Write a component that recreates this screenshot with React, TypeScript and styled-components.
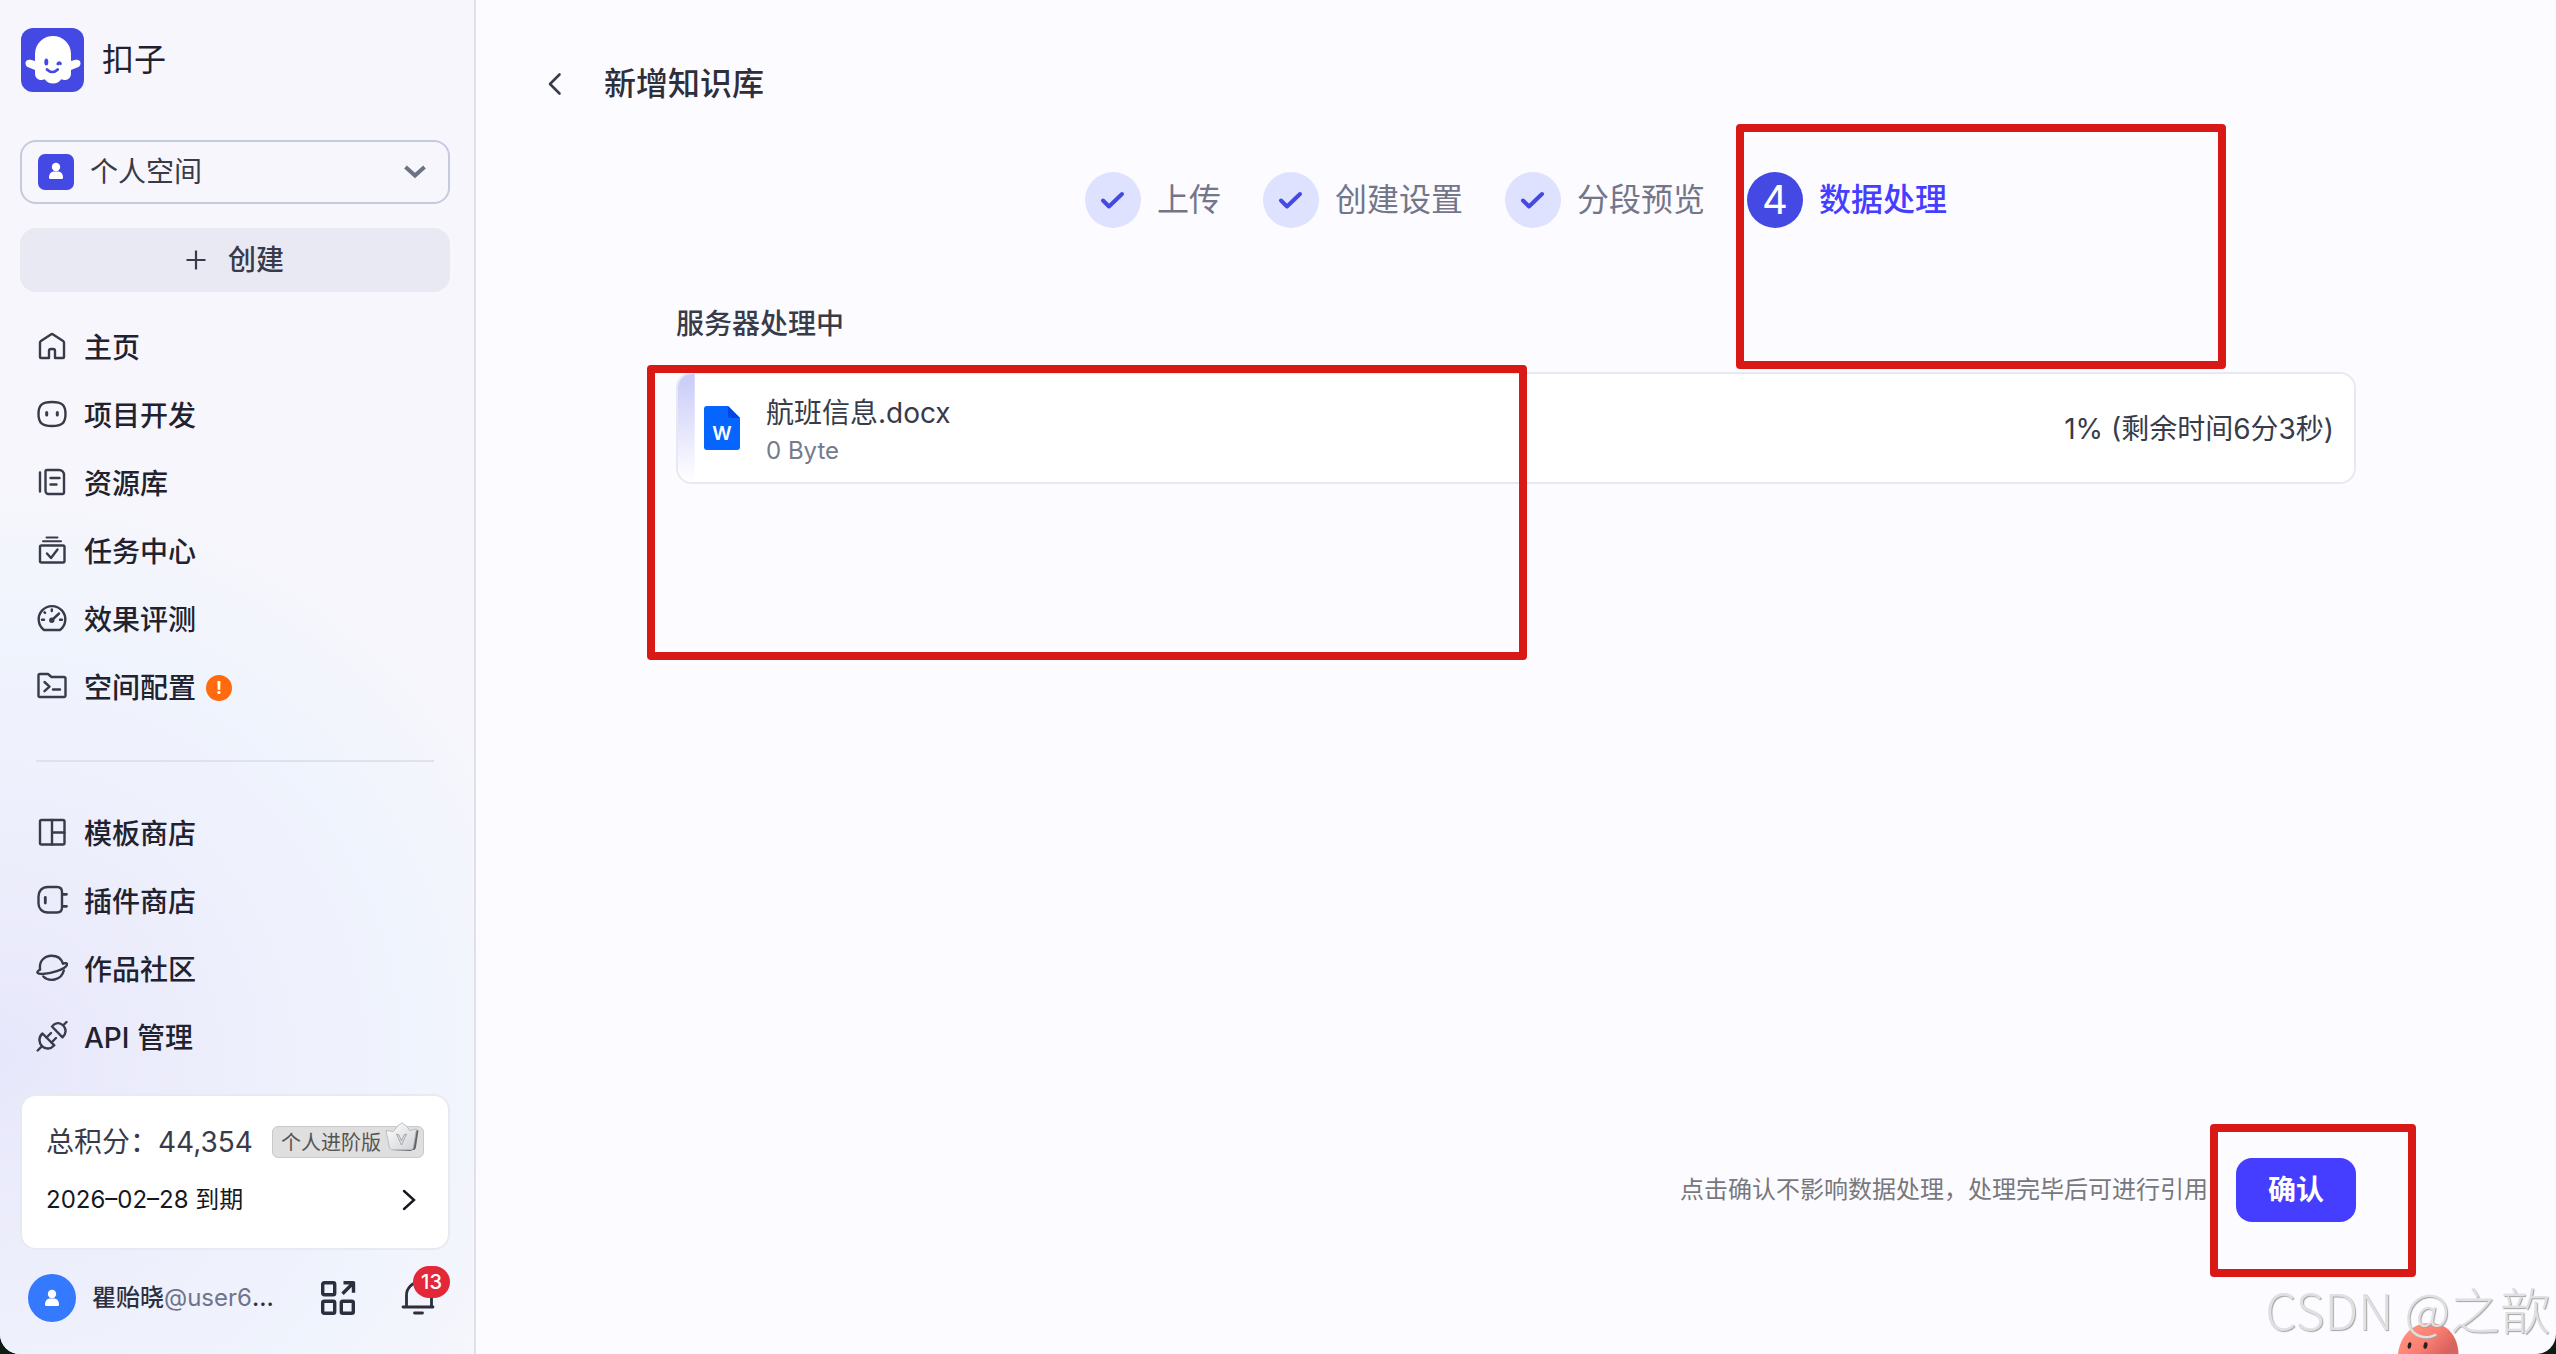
import React from "react";
import styled, { createGlobalStyle, css } from "styled-components";

const GlobalStyle = createGlobalStyle`
  *, *::before, *::after { box-sizing: border-box; }
  body {
    margin: 0;
    background: #0f1c14;
    font-family: Inter, "Noto Sans CJK SC", sans-serif;
    font-size: 28px;
    line-height: 40px;
    color: #20222f;
  }
  button, select { font: inherit; color: inherit; }
  svg { display: block; flex: none; }
`;

const Page = styled.div`
  position: relative;
  display: grid;
  grid-template-columns: 476px minmax(0, 1fr);
  min-height: 100vh;
  overflow: hidden;
  border-radius: 0 0 20px 20px;
  background: #fcfbff;
`;

/* ---------- Sidebar ---------- */

const Sidebar = styled.aside`
  display: flex;
  flex-direction: column;
  padding: 28px 24px 32px 20px;
  border-right: 2px solid #dfe0ee;
  background: radial-gradient(circle at 0 78%, #e7e7fb 0, #eeeffc 240px, #f0f4fd 420px, #f7f6fc 580px);
`;

const Brand = styled.div`
  display: flex;
  align-items: center;
  gap: 18px;
  height: 64px;
  margin-bottom: 48px;
  font-size: 32px;
`;

const SpacePicker = styled.label`
  display: flex;
  align-items: center;
  gap: 16px;
  height: 64px;
  padding: 0 22px 0 16px;
  border: 2px solid #c6cade;
  border-radius: 16px;
  color: #383b49;
`;

const SpaceSelect = styled.select`
  flex: 1;
  min-width: 0;
  padding: 0;
  border: 0;
  outline: 0;
  appearance: none;
  background: transparent;
`;

const CreateButton = styled.button`
  display: flex;
  align-items: center;
  justify-content: center;
  gap: 22px;
  height: 64px;
  margin: 24px 0 20px;
  border: 0;
  border-radius: 16px;
  background: #e9e9f4;
  color: #383b49;
  font-weight: 500;
`;

const Nav = styled.nav`
  display: flex;
  flex-direction: column;
`;

const NavLink = styled.a`
  display: flex;
  align-items: center;
  gap: 16px;
  height: 68px;
  padding: 0 16px;
  color: #20222f;
  font-weight: 500;
  text-decoration: none;

  svg { color: #383b49; }
`;

const NavLabel = styled.span`
  padding-top: 4px;
`;

const Alert = styled.span`
  display: grid;
  place-items: center;
  width: 26px;
  height: 26px;
  margin: 4px 0 0 -6px;
  border-radius: 50%;
  background: #ff6a10;
  color: #fff;
  font-size: 18px;
  font-weight: 700;
  line-height: 26px;
`;

const Divider = styled.hr`
  height: 2px;
  margin: 40px 16px 36px;
  border: 0;
  background: #dde2ef;
`;

const SidebarFooter = styled.div`
  display: flex;
  flex-direction: column;
  gap: 24px;
  margin-top: auto;
`;

const PlanCard = styled.section`
  display: flex;
  flex-direction: column;
  gap: 18px;
  height: 156px;
  padding: 26px 24px;
  border: 2px solid #e8eaf2;
  border-radius: 16px;
  background: #fff;
`;

const PlanRow = styled.div`
  display: flex;
  align-items: center;
  justify-content: space-between;
  white-space: nowrap;
`;

const Points = styled.span`
  color: #383b49;
`;

const PlanTag = styled.span`
  position: relative;
  width: 152px;
  height: 32px;
  padding-left: 8px;
  border: 1px solid #c9c9c9;
  border-radius: 6px;
  background: #e0dfdf;
  color: #565450;
  font-size: 20px;
  line-height: 32px;

  svg {
    position: absolute;
    right: 4px;
    bottom: 3px;
  }
`;

const PlanLink = styled.a`
  display: flex;
  align-items: center;
  justify-content: space-between;
  padding-right: 8px;
  color: #16181f;
  font-size: 24px;
  text-decoration: none;
`;

const Account = styled.div`
  display: flex;
  align-items: center;
  height: 48px;
  padding: 0 14px 0 8px;
`;

const Avatar = styled.span`
  display: grid;
  place-items: center;
  width: 48px;
  height: 48px;
  margin-right: 16px;
  border-radius: 50%;
  background: #3579ff;
`;

const UserName = styled.span`
  flex: 1;
  color: #2b2f3e;
  font-size: 24px;
  font-weight: 500;
  white-space: nowrap;
`;

const Handle = styled.span`
  color: #70748a;
  font-weight: 400;
`;

const IconButton = styled.button`
  position: relative;
  display: grid;
  place-items: center;
  padding: 0;
  border: 0;
  background: none;
  color: #2b2f3e;
`;

const AccountActions = styled.div`
  display: flex;
  gap: 44px;
`;

const Count = styled.span`
  position: absolute;
  top: -14px;
  right: -14px;
  width: 37px;
  height: 32px;
  border-radius: 16px;
  background: #e3283a;
  color: #fff;
  font-size: 20px;
  font-weight: 500;
  line-height: 32px;
  text-align: center;
`;

/* ---------- Main ---------- */

const Main = styled.main`
  display: flex;
  flex-direction: column;
  padding: 60px 0 132px;
`;

const Header = styled.header`
  display: flex;
  align-items: center;
  gap: 20px;
  height: 48px;
  padding: 0 64px;
`;

const Title = styled.h1`
  margin: 0;
  color: #2e2f3b;
  font-size: 32px;
  font-weight: 500;
  line-height: 48px;
`;

const Steps = styled.ol`
  display: flex;
  justify-content: center;
  gap: 42px;
  margin: 64px 0 76px;
  padding: 0;
  list-style: none;
`;

const Step = styled.li<{ $current?: boolean }>`
  position: relative;
  display: flex;
  align-items: center;
  gap: 16px;
  color: ${(p) => (p.$current ? "#453dff" : "#737689")};
  font-size: 32px;
  font-weight: ${(p) => (p.$current ? 500 : 400)};
`;

const StepMark = styled.span<{ $current?: boolean }>`
  display: grid;
  place-items: center;
  width: 56px;
  height: 56px;
  border-radius: 50%;
  background: ${(p) => (p.$current ? "#4449e4" : "#dfe2ff")};
  color: ${(p) => (p.$current ? "#fff" : "#4449e4")};
  font-size: 40px;
  font-weight: 400;
  line-height: 56px;
`;

const Column = styled.div`
  display: flex;
  flex: 1;
  flex-direction: column;
  width: 100%;
  max-width: 1680px;
  margin: 0 auto;
`;

const SectionTitle = styled.h2`
  margin: 0 0 28px;
  color: #383b49;
  font-size: 28px;
  font-weight: 500;
`;

const FileCard = styled.div`
  position: relative;
  border: 2px solid #e6e9f1;
  border-radius: 16px;
  background: #fff;
`;

const FileRow = styled.div<{ $progress: number }>`
  display: flex;
  align-items: center;
  gap: 26px;
  height: 108px;
  padding: 0 20px 0 26px;
  border-radius: 14px;
  background: linear-gradient(#c9caf9, #fff) no-repeat left / ${(p) => p.$progress}% 100%;
`;

const FileText = styled.div`
  flex: 1;
  padding-top: 6px;
`;

const FileName = styled.div`
  color: #383b49;
`;

const FileSize = styled.div`
  color: #767a8c;
  font-size: 24px;
  line-height: 36px;
`;

const Remaining = styled.span`
  padding-top: 2px;
  color: #383b49;
`;

const Footer = styled.footer`
  display: flex;
  align-items: center;
  justify-content: flex-end;
  gap: 28px;
  margin-top: auto;
  color: #77787c;
  font-size: 24px;
`;

const ConfirmSlot = styled.div`
  position: relative;
`;

const ConfirmButton = styled.button`
  height: 64px;
  padding: 0 32px;
  border: 0;
  border-radius: 16px;
  background: #453dff;
  color: #fff;
  font-size: 28px;
  font-weight: 700;
`;

/* Red frames that call out a part of the screen */
const Callout = styled.span<{ $kind: "step" | "file" | "confirm" }>`
  position: absolute;
  z-index: 1;
  border: 8px solid #d91916;
  border-radius: 4px;
  pointer-events: none;
  ${(p) =>
    p.$kind === "step" &&
    css`
      top: -48px;
      left: -11px;
      width: 490px;
      height: 245px;
    `}
  ${(p) =>
    p.$kind === "file" &&
    css`
      top: -9px;
      left: -31px;
      width: 880px;
      height: 295px;
    `}
  ${(p) =>
    p.$kind === "confirm" &&
    css`
      top: -34px;
      left: -26px;
      width: 206px;
      height: 153px;
    `}
`;

const MascotSlot = styled.div`
  position: absolute;
  right: 96px;
  bottom: 0;
`;

const Watermark = styled.div`
  position: absolute;
  right: 6px;
  bottom: 14px;
  color: #e0e0e0;
  font-family: "Noto Sans CJK SC", sans-serif;
  font-size: 50px;
  font-weight: 300;
  line-height: 64px;
  text-shadow: 1px 1px 1px #a4a4a4;
  white-space: nowrap;
`;

/* ---------- Drawings ---------- */

const LineIcon = ({ children }: { children: React.ReactNode }) => (
  <svg width="32" height="32" viewBox="0 0 32 32" fill="none" stroke="currentColor" strokeWidth="2.400" strokeLinecap="round" strokeLinejoin="round" aria-hidden="true">
    {children}
  </svg>
);

const HomeIcon = () => (
  <LineIcon>
    <path d="M5 28h8v-7a2 2 0 0 1 2-2h2a2 2 0 0 1 2 2v7h8a1 1 0 0 0 1-1V12.6a2 2 0 0 0-.9-1.7l-10-6.5a2 2 0 0 0-2.2 0l-10 6.5a2 2 0 0 0-.9 1.7V27a1 1 0 0 0 1 1Z" />
  </LineIcon>
);
const ProjectIcon = () => (
  <LineIcon>
    <path d="M16 4C26 4 29.5 7 29.5 16S26 28 16 28 2.500 25 2.500 16 6 4 16 4Z" />
    <path d="M10.700 14.500v2.500M21.300 14.500v2.500" strokeWidth="3" />
  </LineIcon>
);
const LibraryIcon = () => (
  <LineIcon>
    <path d="M4 6.500v19M11 4h12a5 5 0 0 1 5 5v17.500a1.500 1.500 0 0 1-1.500 1.500h-14a3 3 0 0 1-3-3V5.500A1.500 1.500 0 0 1 11 4Z" />
    <path d="M14.500 12h9M14.500 18.500h6" />
  </LineIcon>
);
const TaskIcon = () => (
  <LineIcon>
    <path d="M10.500 3.500h11M7 7.300h18" strokeWidth="2" />
    <rect x="4" y="11.500" width="24.500" height="17" rx="1.500" />
    <path d="m11 19.500 4 4.500 6.500-8.500" />
  </LineIcon>
);
const GaugeIcon = () => (
  <LineIcon>
    <path d="M8 28h16a13.300 13.300 0 1 0-16 0Z" />
    <path d="M15.800 7.500v1.500M6 17.700h2M24 17.700h2M8.500 10.300l.6.6" />
    <path d="m15.500 18.500 7.500-7" />
    <circle cx="15.800" cy="18.300" r="1.500" fill="currentColor" />
  </LineIcon>
);
const ConfigIcon = () => (
  <LineIcon>
    <path d="M4 4h8l3.500 3H28a1.500 1.500 0 0 1 1.500 1.500v17A1.500 1.500 0 0 1 28 27H4a1.500 1.500 0 0 1-1.500-1.500v-20A1.500 1.500 0 0 1 4 4Z" />
    <path d="m8.500 12 5 4.600-5 4.600M17 19.500h7" />
  </LineIcon>
);
const TemplateIcon = () => (
  <LineIcon>
    <rect x="4" y="4" width="24.500" height="24.500" rx="1.500" />
    <path d="M16 4v24.500M16 16.500h12.500" />
  </LineIcon>
);
const PluginIcon = () => (
  <LineIcon>
    <path d="M12 3h9c3 0 5 2 5 5v15.500c0 3-2 5-5 5h-9c-6 0-9.500-4-9.500-9v-7C2.500 7 6 3 12 3Z" />
    <path d="M26.500 10.300H30.500M26.500 22.300H30.500" strokeWidth="2.800" />
    <path d="M9.300 13.500v5.500" strokeWidth="2.800" />
  </LineIcon>
);
const PlanetIcon = () => (
  <LineIcon>
    <path d="M4 17.500C2.800 8.500 9 3.800 15.700 3.800c5 0 9.500 2.700 11.300 7.700" />
    <path d="M4 17.500c-3.500 2-3.800 4 .5 4.400 9 .7 25.700-4.700 26.500-9.400.3-1.500-1.500-1.700-4-1" />
    <path d="M7.300 24.500c5.500 5.500 18 4.500 20.500-6" />
  </LineIcon>
);
const ApiIcon = () => (
  <LineIcon>
    <path d="M16 6.500 26.500 17.300c4-3.500 4-8.500.7-11.800S19.500 2.200 16 6.500ZM27.500 5 30.500 2" />
    <path d="M6.500 13.500 18.300 25.300c-3.500 4-8.800 4.300-12.300.8s-3.500-9 .5-12.600ZM5 27.200 1.700 30.500" />
    <path d="m10.500 17.500 4.500-4.500M15.500 22.500l4.500-4.500" />
  </LineIcon>
);

const LogoIcon = () => (
  <svg width="64" height="64" viewBox="0 0 64 64" role="img" aria-label="logo">
    <rect x="1" width="63" height="64" rx="12" fill="#4449e4" />
    <path fill="#fff" d="M15 26a18 18 0 0 1 36 0v7l4.500-1.200c3-.6 5 .8 5 3.400 0 2-1.200 3.600-3.400 4.400L51 42v3.500c0 5-4.500 8-9.800 5.800-3 5.600-13.400 5.600-16.400 0C19.500 53.500 15 50.500 15 45.500V42l-6.100-2.400c-2.200-.8-3.400-2.400-3.400-4.400 0-2.600 2-4 5-3.400L15 33Z" />
    <ellipse cx="26.300" cy="34" rx="2" ry="3.600" fill="#4449e4" />
    <g fill="none" stroke="#4449e4" strokeWidth="2.800" strokeLinecap="round">
      <path d="M37.800 36c.6-1.800 2-1.800 2.700-.2" />
      <path d="M27 41.500c3.200 3.200 7.500 3.200 10.700 0" />
    </g>
  </svg>
);

const PersonIcon = ({ tile }: { tile?: boolean }) => (
  <svg width={tile ? 36 : 48} height={tile ? 36 : 48} viewBox={tile ? "6 6 36 36" : "0 0 48 48"} aria-hidden="true">
    {tile && <rect x="6" y="6" width="36" height="36" rx="7" fill="#4449e4" />}
    <g fill="#fff" transform={tile ? "translate(0 -1)" : undefined}>
      <circle cx="24" cy="20" r="4.200" />
      <path d="M17 30.500c0-4 2.500-6 5-6h4c2.500 0 5 2 5 6 0 1-.6 1.500-1.500 1.500h-11c-.9 0-1.500-.5-1.500-1.500Z" />
    </g>
  </svg>
);

const ChevronDown = () => (
  <svg width="22" height="14" viewBox="0 0 22 14" fill="none" stroke="#6d7285" strokeWidth="4" aria-hidden="true">
    <path d="m1.500 2 9.500 8.500 9.500-8.500" />
  </svg>
);
const PlusIcon = () => (
  <svg width="20" height="20" viewBox="0 0 20 20" stroke="currentColor" strokeWidth="2.200" aria-hidden="true">
    <path d="M10 .5v19M.5 10h19" />
  </svg>
);
const ChevronRight = () => (
  <svg width="14" height="22" viewBox="0 0 14 22" fill="none" stroke="currentColor" strokeWidth="2.400" strokeLinecap="round" aria-hidden="true">
    <path d="m2 2 10 9-10 9" />
  </svg>
);
const BackIcon = () => (
  <svg width="44" height="44" viewBox="0 0 44 44" fill="none" stroke="#383b49" strokeWidth="2.600" strokeLinecap="round" strokeLinejoin="round" aria-hidden="true">
    <path d="M19.500 12.500 10 22l9.500 9.500" />
  </svg>
);
const CheckIcon = () => (
  <svg width="28" height="28" viewBox="0 0 28 28" fill="none" stroke="currentColor" strokeWidth="4" strokeLinecap="round" strokeLinejoin="round" aria-hidden="true">
    <path d="m4 14.500 6 6L23 8" />
  </svg>
);
const CrownIcon = () => (
  <svg width="34" height="32" viewBox="0 0 34 32" aria-hidden="true">
    <defs>
      <linearGradient id="crown" x1="0" y1="0" x2="1" y2="1">
        <stop offset="0" stopColor="#fff" />
        <stop offset="1" stopColor="#cfd1d4" />
      </linearGradient>
    </defs>
    <path d="M5 28h23c2 0 2.600-1 3-3l2.500-17-4 1-3 20Z" fill="#5d646e" />
    <path d="M1 8.500 8.500 9.500l3.500-5 5-3.700 5.500 4.200 2 3.500 7-1.500-3 18c-.3 2-1 2.500-3 2.500h-18c-2 0-2.800-.6-3.200-2.500Z" fill="url(#crown)" stroke="#aeb2b8" strokeWidth=".8" />
    <path d="m11.500 12 5 11 5-11-2.500 1-2.500 6-2.500-6Z" fill="#e9eaec" stroke="#90959d" strokeWidth=".8" />
  </svg>
);
const AppsIcon = () => (
  <svg width="36" height="36" viewBox="0 0 36 36" fill="none" stroke="currentColor" strokeWidth="3.400" strokeLinejoin="round" aria-hidden="true">
    <rect x="2.700" y="2.700" width="12" height="12" rx="1.500" />
    <rect x="2.700" y="21.300" width="12" height="12" rx="1.500" />
    <rect x="21.300" y="21.300" width="12" height="12" rx="1.500" />
    <path d="M22.500 13.800 33 3.300M23.500 2.800h10v10" />
  </svg>
);
const BellIcon = () => (
  <svg width="36" height="36" viewBox="0 0 36 36" fill="none" stroke="currentColor" strokeWidth="2.800" strokeLinecap="round" aria-hidden="true">
    <path d="M3 27h30M6.500 27V15a12.500 12.500 0 0 1 25 0v12M14.500 33h8" />
  </svg>
);
const WordIcon = () => (
  <svg width="36" height="44" viewBox="0 0 36 44" role="img" aria-label="Word">
    <path d="M3 0h21l12 12v29a3 3 0 0 1-3 3H3a3 3 0 0 1-3-3V3a3 3 0 0 1 3-3Z" fill="#0664ff" />
    <path d="M24 0 36 12h-9a3 3 0 0 1-3-3Z" fill="#0046df" />
    <text x="18" y="33.500" textAnchor="middle" fill="#fff" fontFamily="Inter, sans-serif" fontSize="19" fontWeight="600">W</text>
  </svg>
);
const Mascot = () => (
  <svg width="64" height="32" viewBox="0 0 64 32" aria-hidden="true">
    <defs>
      <linearGradient id="mascot" x1="0" y1="0" x2="1" y2=".5">
        <stop offset="0" stopColor="#ff9c88" />
        <stop offset=".6" stopColor="#fd7f72" />
        <stop offset="1" stopColor="#d9645f" />
      </linearGradient>
    </defs>
    <path d="M2 32C4 14 16 1 34 1s28 14 28.500 31Z" fill="url(#mascot)" />
    <ellipse cx="13.500" cy="23.500" rx="1.800" ry="3.200" fill="#2b2024" transform="rotate(10 13.500 23.500)" />
    <ellipse cx="29.500" cy="23.500" rx="2" ry="3.400" fill="#2b2024" transform="rotate(10 29.500 23.500)" />
  </svg>
);

/* ---------- Data ---------- */

type NavItem = { label: string; Icon: React.FC; alert?: boolean };

const workspaceItems: NavItem[] = [
  { label: "主页", Icon: HomeIcon },
  { label: "项目开发", Icon: ProjectIcon },
  { label: "资源库", Icon: LibraryIcon },
  { label: "任务中心", Icon: TaskIcon },
  { label: "效果评测", Icon: GaugeIcon },
  { label: "空间配置", Icon: ConfigIcon, alert: true },
];

const storeItems: NavItem[] = [
  { label: "模板商店", Icon: TemplateIcon },
  { label: "插件商店", Icon: PluginIcon },
  { label: "作品社区", Icon: PlanetIcon },
  { label: "API 管理", Icon: ApiIcon },
];

const doneSteps = ["上传", "创建设置", "分段预览"];

const NavGroup = ({ items }: { items: NavItem[] }) => (
  <Nav>
    {items.map(({ label, Icon, alert }) => (
      <NavLink href="#" key={label}>
        <Icon />
        <NavLabel>{label}</NavLabel>
        {alert && <Alert>!</Alert>}
      </NavLink>
    ))}
  </Nav>
);

export default function App() {
  return (
    <>
      <GlobalStyle />
      <Page>
        <Sidebar>
          <Brand>
            <LogoIcon />
            扣子
          </Brand>
          <SpacePicker>
            <PersonIcon tile />
            <SpaceSelect aria-label="空间">
              <option>个人空间</option>
            </SpaceSelect>
            <ChevronDown />
          </SpacePicker>
          <CreateButton type="button">
            <PlusIcon />
            创建
          </CreateButton>
          <NavGroup items={workspaceItems} />
          <Divider />
          <NavGroup items={storeItems} />
          <SidebarFooter>
            <PlanCard>
              <PlanRow>
                <Points>总积分：44,354</Points>
                <PlanTag>
                  个人进阶版
                  <CrownIcon />
                </PlanTag>
              </PlanRow>
              <PlanLink href="#">
                2026–02–28 到期
                <ChevronRight />
              </PlanLink>
            </PlanCard>
            <Account>
              <Avatar>
                <PersonIcon />
              </Avatar>
              <UserName>
                瞿贻晓<Handle>@user6</Handle>...
              </UserName>
              <AccountActions>
                <IconButton type="button" aria-label="应用">
                  <AppsIcon />
                </IconButton>
                <IconButton type="button" aria-label="通知">
                  <BellIcon />
                  <Count>13</Count>
                </IconButton>
              </AccountActions>
            </Account>
          </SidebarFooter>
        </Sidebar>

        <Main>
          <Header>
            <IconButton type="button" aria-label="返回">
              <BackIcon />
            </IconButton>
            <Title>新增知识库</Title>
          </Header>
          <Steps>
            {doneSteps.map((label) => (
              <Step key={label}>
                <StepMark>
                  <CheckIcon />
                </StepMark>
                {label}
              </Step>
            ))}
            <Step $current aria-current="step">
              <StepMark $current>4</StepMark>
              数据处理
              <Callout $kind="step" />
            </Step>
          </Steps>
          <Column>
            <SectionTitle>服务器处理中</SectionTitle>
            <FileCard>
              <FileRow $progress={1}>
                <WordIcon />
                <FileText>
                  <FileName>航班信息.docx</FileName>
                  <FileSize>0 Byte</FileSize>
                </FileText>
                <Remaining>1% (剩余时间6分3秒)</Remaining>
              </FileRow>
              <Callout $kind="file" />
            </FileCard>
            <Footer>
              点击确认不影响数据处理，处理完毕后可进行引用
              <ConfirmSlot>
                <ConfirmButton type="button">确认</ConfirmButton>
                <Callout $kind="confirm" />
              </ConfirmSlot>
            </Footer>
          </Column>
        </Main>

        <MascotSlot>
          <Mascot />
        </MascotSlot>
        <Watermark>CSDN @之歆</Watermark>
      </Page>
    </>
  );
}
